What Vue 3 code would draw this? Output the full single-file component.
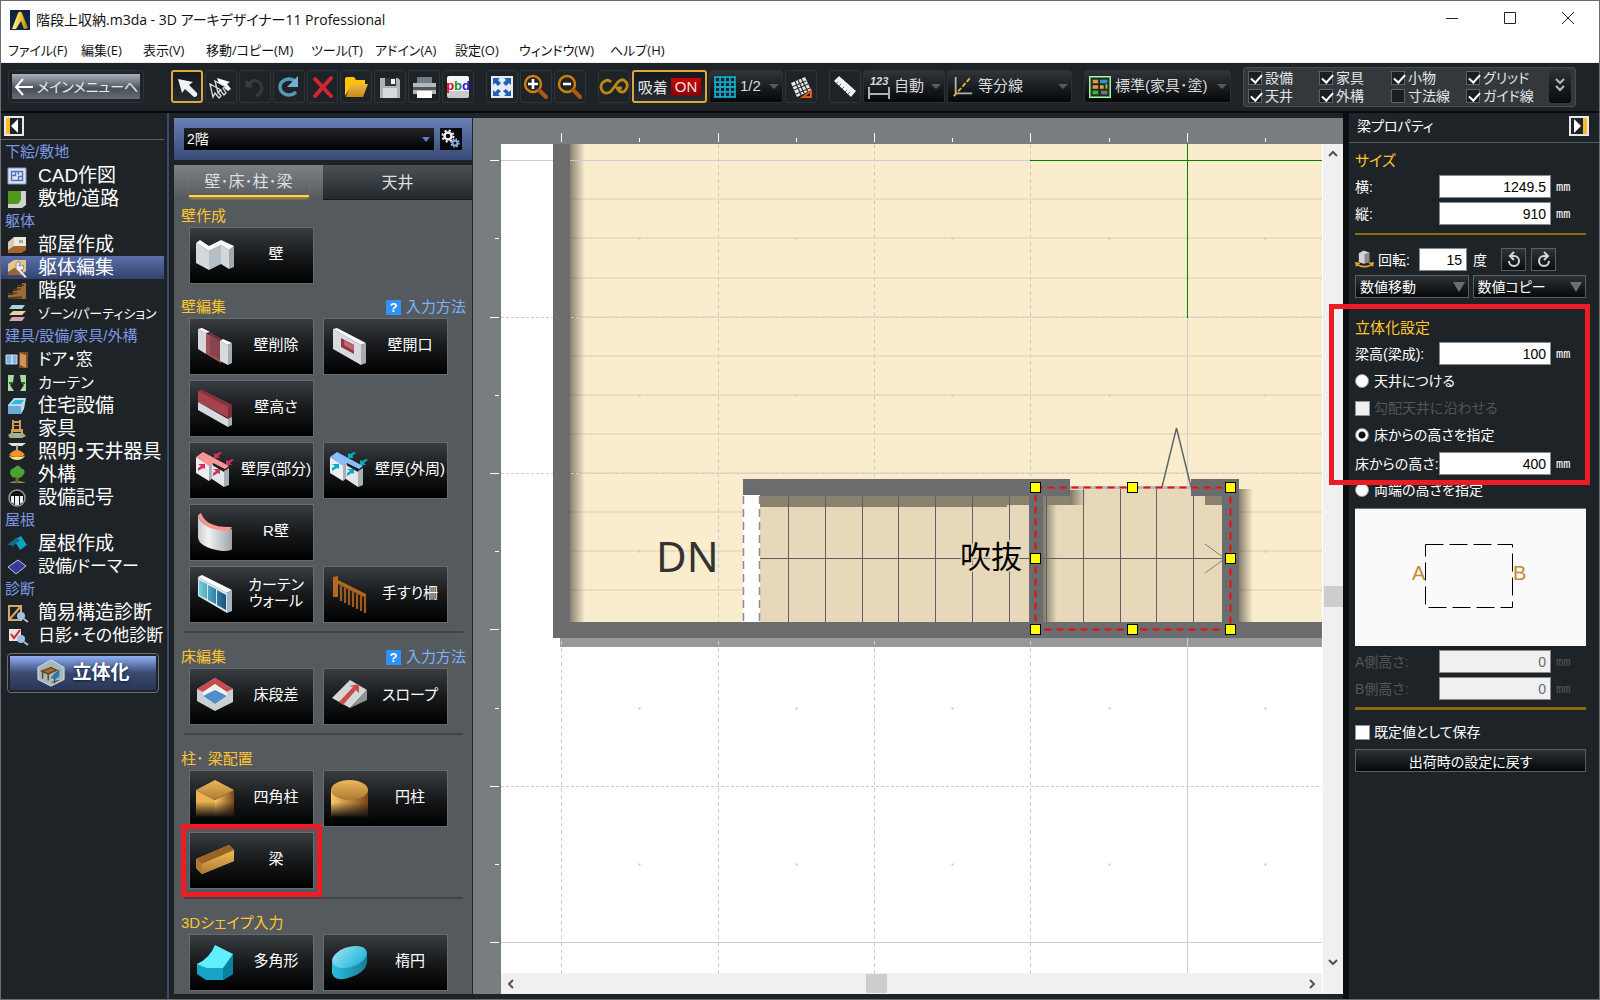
<template>
  <div class="window">
    <svg class="sprite" aria-hidden="true">
      <defs>
        <linearGradient id="g-wood" x1="0" x2="1"><stop offset="0" stop-color="#fdc868" /><stop offset="1" stop-color="#7a4717" /></linearGradient>
        <linearGradient id="g-wood-top" x1="0" y1="0" x2="0" y2="1"><stop offset="0" stop-color="#edb958" /><stop offset="1" stop-color="#ac7936" /></linearGradient>
        <linearGradient id="g-fade" x1="0" y1="0" x2="0" y2="1"><stop offset="0.4" stop-color="#111" stop-opacity="0" /><stop offset="1" stop-color="#111" /></linearGradient>
        <linearGradient id="g-curve" x1="0" x2="1"><stop offset="0" stop-color="#c9ccce" /><stop offset="0.3" stop-color="#f1f3f4" /><stop offset="1" stop-color="#9ea3a6" /></linearGradient>
        <linearGradient id="g-glass" x1="0" x2="1"><stop offset="0" stop-color="#6fd0d8" /><stop offset="1" stop-color="#174f85" /></linearGradient>
        <linearGradient id="g-cyan" x1="0" x2="1" y1="0" y2="1"><stop offset="0" stop-color="#9fe3f2" /><stop offset="1" stop-color="#12b2d8" /></linearGradient>
        <linearGradient id="g-cyan-side" x1="0" x2="1"><stop offset="0" stop-color="#2bbfe0" /><stop offset="1" stop-color="#1a7d94" /></linearGradient>
        <linearGradient id="g-folder" x1="0" y1="0" x2="0" y2="1"><stop offset="0" stop-color="#f3b93c" /><stop offset="1" stop-color="#c78a1c" /></linearGradient>
        <linearGradient id="g-gold" x1="0" x2="1"><stop offset="0" stop-color="#fff0a0" /><stop offset="0.5" stop-color="#f3cf3c" /><stop offset="1" stop-color="#a87c10" /></linearGradient>
      </defs>

      <!-- toolbar -->
      <symbol id="t-select" viewBox="0 0 30 30"><path d="M6 7l4 14 3-4 9 8q4 0 3-4l-8-8 4-3z" fill="#f2f2f2" /></symbol>
      <symbol id="t-multi" viewBox="0 0 30 30"><path d="M11 6l13 4-3 2 4 5-3 2-5-4-2 2z" fill="#fff" /><path d="M4 12l3 13 2-4 4 5 2-2-3-4 3-2zM9 9l3 12 2-3 4 5 2-2-3-5 3-1z" fill="#1b1f22" stroke="#ddd" stroke-width="1.3" /></symbol>
      <symbol id="t-undo" viewBox="0 0 30 30"><path d="M7 9v5h5M8 13q6-8 12-2 5 8-4 13" fill="none" stroke="#343a3e" stroke-width="3" /></symbol>
      <symbol id="t-redo" viewBox="0 0 30 30"><path d="M22 20a9 8 0 1 1-1-11" fill="none" stroke="#5799b4" stroke-width="3.4" /><path d="M24 4v11H13z" fill="#6fb2ca" /></symbol>
      <symbol id="t-delete" viewBox="0 0 30 30"><path d="M7 7l16 17M23 6L7 24" stroke="#d3252f" stroke-width="4" stroke-linecap="round" /></symbol>
      <symbol id="t-open" viewBox="0 0 30 30"><path d="M4 24V7q0-2 2-2h7l2 3h9v5H11z" fill="#ffc400" /><path d="M5 25l5-13h17l-5 13z" fill="url(#g-folder)" /></symbol>
      <symbol id="t-save" viewBox="0 0 30 30"><path d="M5 6h18l2 2v18H5z" fill="#aeb2b5" /><path d="M10 6h11v8H10z" fill="#33383b" /><path d="M16 7h4v5h-4z" fill="#f3f3f3" /><path d="M8 16h14v10H8z" fill="#d8dadb" /></symbol>
      <symbol id="t-print" viewBox="0 0 30 30"><path d="M8 5h15v8H8z" fill="#737b83" /><path d="M4 11h23v11H4z" fill="#b4b9bd" /><path d="M4 15h23v3H4z" fill="#4d565c" /><path d="M8 19h15v7H8z" fill="#fff" /></symbol>
      <symbol id="t-fit" viewBox="0 0 30 30"><path d="M4 4h22v22H4z" fill="#e7ebef" /><path d="M6 6h7l-2 2 3 3-3 3-3-3-2 2zM24 6h-7l2 2-3 3 3 3 3-3 2 2zM6 24h7l-2-2 3-3-3-2-3 3-2-2zM24 24h-7l2-2-3-3 3-2 3 3 2-2z" fill="#1d62b5" /></symbol>
      <symbol id="t-zoomin" viewBox="0 0 30 30"><circle cx="12" cy="12" r="8" fill="none" stroke="#d67d0c" stroke-width="2.4" /><path d="M12 7v10M7 12h10" stroke="#fff" stroke-width="2.6" /><path d="M18 18l7 7" stroke="#a75d0c" stroke-width="4" stroke-linecap="round" /></symbol>
      <symbol id="t-zoomout" viewBox="0 0 30 30"><circle cx="12" cy="12" r="8" fill="none" stroke="#d67d0c" stroke-width="2.4" /><path d="M8 12h8" stroke="#fff" stroke-width="2.6" /><path d="M18 18l7 7" stroke="#a75d0c" stroke-width="4" stroke-linecap="round" /></symbol>
      <symbol id="t-loop" viewBox="0 0 30 30"><path d="M12 10q-3-3-6-1-4 2-4 6t4 6q4 1 7-3l6-8q4-4 7-1 3 2 2 6t-4 5-6-4h5" fill="none" stroke="#b98a0e" stroke-width="2.800" /></symbol>
      <symbol id="t-grid" viewBox="0 0 20 20"><path d="M0 0h20v20H0z" fill="#04242c" /><path d="M1 0v20M5.500 0v20M10 0v20M14.500 0v20M19 0v20M0 1h20M0 5.500h20M0 10h20M0 14.500h20M0 19h20" stroke="#18a6c4" stroke-width="1.600" /></symbol>
      <symbol id="t-rotgrid" viewBox="0 0 30 30"><path d="M5 11l14-6 6 13-14 7z" fill="#e8e8e8" /><path d="M9 9l6 14M12 8l6 13M15 6l7 14M6 15l14-6M8 18l14-6M10 22l14-6" stroke="#2b3033" stroke-width="1.2" /><path d="M17 25h8v-6z" fill="#1b1f22" stroke="#dd5b16" stroke-width="2" /></symbol>
      <symbol id="t-ruler" viewBox="0 0 30 30"><path d="M4 9l5-5 17 15-5 6z" fill="#f1f1f1" /><path d="M6 12l2-2M9 14l2-2M12 17l2-2M15 20l2-2M18 22l2-2" stroke="#666" /></symbol>
      <symbol id="t-divide" viewBox="0 0 24 24"><path d="M4 1v18h18" fill="none" stroke="#aeb2b4" stroke-width="2" /><path d="M2 22L20 2" stroke="#e7b434" stroke-width="2" stroke-dasharray="5 2" /></symbol>
      <symbol id="t-plan" viewBox="0 0 24 24"><path d="M0 0h24v24H0z" fill="#eafbe8" /><path d="M1.500 1.500h21v21h-21z" fill="#193022" stroke="#47ae4c" stroke-width="1.500" /><path d="M4 4h6v4H4zM4 10h6v4H4z" fill="#f0904a" /><path d="M4 16h6v4H4z" fill="#42b03e" /><path d="M12 4h8v4h-8z" fill="#3f8bd6" /><path d="M12 10h4v4h-4zM18 9h2v5h-2z" fill="#e8a04a" /><path d="M13 16h7v4h-7z" fill="#777" /></symbol>

      <!-- category list -->
      <symbol id="s-cad" viewBox="0 0 24 20"><path d="M3 2h18v16H3z" fill="#dfe7f6" stroke="#8798bb" /><path d="M6.500 5.500h11v9h-11zM10.500 5.500v4h-4M13.500 14.500v-4h4M13.500 5.500v3" fill="none" stroke="#5574ba" stroke-width="1.500" /></symbol>
      <symbol id="s-site" viewBox="0 0 24 20"><path d="M3 2h18v14l-4 3H3z" fill="#cfd2d0" /><path d="M3 2h13v9l-3 4H3z" fill="#4f9a1e" /></symbol>
      <symbol id="s-room" viewBox="0 0 24 20"><path d="M3 7l6-5h12v12l-5 4H3z" fill="#d9cdb6" /><path d="M9 2h12v11H9z" fill="#efe9dc" /><path d="M3 15l6-4h12v4l-5 3H3z" fill="#a5672e" /><path d="M14 5h4v3h-4z" fill="#aaa" /></symbol>
      <symbol id="s-body" viewBox="0 0 24 20"><path d="M3 6l6-4h12v11l-5 4H3z" fill="#e3c78f" /><path d="M3 14l6-4 9 2-3 5H3z" fill="#9c6331" /><path d="M11 7q0-4 4-3l-1 4 4-1q2 5-2 5l6 7-2 1-7-7q-3-1-2-6z" fill="#eee" stroke="#555" stroke-width=".6" /></symbol>
      <symbol id="s-stairs" viewBox="0 0 24 20"><path d="M3 17v-3h5v-4h4V6h5V2h4v16z" fill="#9a6a3a" /><path d="M3 13l9-1M8 9l8-1M12 5l7-1M3 17l14-1" stroke="#5d3c1d" stroke-width="1.500" /></symbol>
      <symbol id="s-zone" viewBox="0 0 24 20"><path d="M7 1h13l-3 4H4z" fill="#a2d8dd" /><path d="M8 7h13l-4 4H4z" fill="#ecd398" /><path d="M7 13h13l-3 4H4z" fill="#d8a2b6" /></symbol>
      <symbol id="s-door" viewBox="0 0 24 20"><path d="M1 5h11v9H1z" fill="#7db1e7" stroke="#c6d7e6" /><path d="M7 5v9" stroke="#fff" /><path d="M14 2h9v16h-9z" fill="#7c4c27" /><path d="M15 3l6 2v13l-6-3z" fill="#cf945a" /></symbol>
      <symbol id="s-curtain" viewBox="0 0 24 20"><path d="M3 2h6l-1 7-3 3 4 6H3zM21 2h-6l1 7 3 3-4 6h6z" fill="#a9dc9c" /><path d="M4 10h3M17 10h3" stroke="#1d6b2c" stroke-width="2" /></symbol>
      <symbol id="s-equip" viewBox="0 0 24 20"><path d="M3 9l6-7h12l-2 11-3 5H3z" fill="#b9dcf2" /><path d="M6 8l4-4h9l-3 4z" fill="#32bbd0" /><path d="M3 10h13v8H3z" fill="#6ba9dc" /></symbol>
      <symbol id="s-chair" viewBox="0 0 24 20"><path d="M3 16l3-2h12l3 3-4 2H5z" fill="#98b898" /><path d="M7 11V1h2v10zM14 11V1h2v10zM8 2h7v2H8zM8 6h7v1H8zM6 10h12v3H6zM6 13h2v5H6zM16 13h2v5h-2z" fill="#d29b58" /></symbol>
      <symbol id="s-lamp" viewBox="0 0 24 20"><path d="M3 1h18l-4 3H7z" fill="#e4e1d8" /><path d="M12 3v6" stroke="#aaa" stroke-width="2" /><path d="M4 13q4-5 8-5t8 5q-8 4-16 0z" fill="#ef952a" /><path d="M4 14q8 2 16 0-3 4-8 4t-8-4z" fill="#ffdf8a" /></symbol>
      <symbol id="s-tree" viewBox="0 0 24 20"><path d="M4 18q8-4 17 0z" fill="#70a55c" /><path d="M12 8v10" stroke="#8c5a2a" stroke-width="3" /><path d="M5 8q0-4 4-5 4-5 7 0 5 2 3 6-4 6-8 3-4 2-6-4z" fill="#49a331" /></symbol>
      <symbol id="s-mark" viewBox="0 0 24 20"><circle cx="12" cy="10" r="8" fill="#111" stroke="#999" stroke-width="1.500" /><path d="M6 8h3v8l-3-2zM10 8h4v9h-4zM15 8h3v6l-3 2z" fill="#eee" /></symbol>
      <symbol id="s-roof" viewBox="0 0 24 20"><path d="M9 6l7-4 6 9-7 5z" fill="#12a0c0" /><path d="M2 11l9-7 4 2-8 7-1-2z" fill="#0f6f8b" /></symbol>
      <symbol id="s-solar" viewBox="0 0 24 20"><path d="M3 10l10-7 8 6-10 8z" fill="#333b9b" stroke="#bfc4ea" stroke-width="1" /></symbol>
      <symbol id="s-frame" viewBox="0 0 24 20"><path d="M4 3h12v14H4zM4 17L16 3" fill="none" stroke="#d7a86a" stroke-width="2" /><circle cx="16" cy="13" r="4" fill="#9dc2ea" /><path d="M19 16l4 3" stroke="#bbb" stroke-width="2" /></symbol>
      <symbol id="s-check" viewBox="0 0 24 20"><path d="M4 3h12v12H4z" fill="#ede4da" /><path d="M6 8l3 4 6-8" fill="none" stroke="#c9272d" stroke-width="2" /><circle cx="16" cy="13" r="4" fill="#9dc2ea" /><path d="M19 16l4 3" stroke="#bbb" stroke-width="2" /></symbol>

      <!-- part buttons -->
      <symbol id="p-wall" viewBox="0 0 40 40"><path d="M1 7l13 8v19L1 27zM26 9l8 5v19l-8-5z" fill="#d2d9de" /><path d="M14 15l12-6v19l-12 6z" fill="#b5bfc5" /><path d="M34 14l5-4v21l-5 2z" fill="#9ea9b0" /><path d="M1 7l4-3 9 6 12-6 13 6-5 4-8-5-12 6z" fill="#f5f8fa" /></symbol>
      <symbol id="p-cut" viewBox="0 0 40 40"><path d="M3 2l8 4v21l-8-5z" fill="#d4d7dc" /><path d="M3 2l4-1 8 4-4 1z" fill="#fff" /><path d="M11 6l15 8v22L11 27z" fill="#a2525a" /><path d="M15 5l12 7v23l-12-8z" fill="#7d3d46" opacity=".7" /><path d="M25 14l8 4v20l-8-4z" fill="#d7dade" /><path d="M25 14l3-2 9 4-4 2z" fill="#fff" /><path d="M33 18l4-2v20l-4 2z" fill="#a7abb0" /></symbol>
      <symbol id="p-hole" viewBox="0 0 40 40"><path d="M4 2l28 16v20L4 22z" fill="#d7dade" /><path d="M4 2l4-1 29 15-5 2z" fill="#f8f9fa" /><path d="M32 18l5-2v20l-5 2z" fill="#a7abb0" /><path d="M12 11l13 7v9l-13-7z" fill="#8f3944" /><path d="M15 13l10 6v5l-10-6z" fill="#c06670" /></symbol>
      <symbol id="p-height" viewBox="0 0 40 40"><path d="M3 2l4-1 30 15-4 2v11L3 13z" fill="#a5424c" /><path d="M3 2l4-1 30 15-4 2z" fill="#85333d" /><path d="M33 18l4-2v13l-4 2z" fill="#7d303a" /><path d="M3 13l30 17v8L3 21z" fill="#d7dade" /><path d="M33 30l4-2v8l-4 2z" fill="#aaaeb2" /></symbol>
      <symbol id="p-thick-part" viewBox="0 0 40 40"><path d="M1 6l13 8v16L1 22z" fill="#eceff1" /><path d="M14 14l4-2v15l-4 3zM29 20l5-3v17l-5 2z" fill="#a9afb3" /><path d="M17 14l12 7v15l-12-8z" fill="#e3e6e8" /><path d="M1 6l7-5 26 14-4 3-12-6-4 3z" fill="#fc9696" /><path d="M3 13h7v5l-2-1-5 3v-3l3-2zM18 18h7v5l-2-1-5 3v-3l3-2zM27 2l-4 3 2 2h-6V2l2 1 4-2zM39 9l-4 3 2 2h-6V9l2 1 4-2z" fill="#d0305f" /></symbol>
      <symbol id="p-thick-all" viewBox="0 0 40 40"><path d="M1 6l13 8v16L1 22z" fill="#eceff1" /><path d="M14 14l4-2v15l-4 3zM29 20l5-3v17l-5 2z" fill="#a9afb3" /><path d="M17 14l12 7v15l-12-8z" fill="#e3e6e8" /><path d="M1 6l7-5 26 14-4 3-12-6-4 3z" fill="#88bdfb" /><path d="M3 13h7v5l-2-1-5 3v-3l3-2zM18 18h7v5l-2-1-5 3v-3l3-2zM27 2l-4 3 2 2h-6V2l2 1 4-2zM39 9l-4 3 2 2h-6V9l2 1 4-2z" fill="#05adc2" /></symbol>
      <symbol id="p-round" viewBox="0 0 40 40"><path d="M3 2q4 15 30 15l4-1v20q-1 2-10 2Q3 34 3 24z" fill="url(#g-curve)" /><path d="M3 2l3-2q5 15 31 14l-3 4Q8 18 3 2z" fill="#fa9490" /></symbol>
      <symbol id="p-curtainwall" viewBox="0 0 40 40"><path d="M3 2l29 16v20L3 21z" fill="#d7e8f0" /><path d="M3 2l4-2 30 15-5 3z" fill="#fff" /><path d="M32 18l5-3v21l-5 2z" fill="#aab4bc" /><path d="M4 5l8 4v15l-8-4zM13 10l8 4v15l-8-4zM22 15l9 5v15l-9-5z" fill="url(#g-glass)" /></symbol>
      <symbol id="p-rail" viewBox="0 0 40 40"><path d="M4 2l5-1v21H4zM9 5l28 14v4L9 9z" fill="#b3691f" /><path d="M12 9v17M16 11v17M20 13v17M24 15v17M28 17v17M32 19v17M36 20v18" stroke="#9f5b1d" stroke-width="2.200" /></symbol>
      <symbol id="p-step" viewBox="0 0 40 40"><path d="M2 12l18-11 18 11v13L20 34 2 24z" fill="#ccd0d2" /><path d="M2 12l18-11 18 11-7 3-11-8-12 8z" fill="#c94b4f" /><path d="M8 15l12-8 12 8v5l-12 7-12-7z" fill="#eff0f0" /><path d="M8 19l12-6 12 6-12 8z" fill="#4f8dcb" /></symbol>
      <symbol id="p-slope" viewBox="0 0 40 40"><path d="M3 21L21 3l17 10-17 18z" fill="#d5d6d6" /><path d="M38 13v10L21 31z" fill="#8f9292" /><path d="M10 25l14-15-4-1 10-2v9l-3-3-13 15z" fill="#c94c50" /></symbol>
      <symbol id="p-square" viewBox="0 0 40 40"><path d="M1 11l19 10v16H1z" fill="#edb24f" /><path d="M20 21l19-10v26H20z" fill="url(#g-wood)" /><path d="M1 11L20 1l19 10-19 10z" fill="url(#g-wood-top)" /><path d="M0 12h40v26H0z" fill="url(#g-fade)" /></symbol>
      <symbol id="p-cylinder" viewBox="0 0 40 40"><path d="M2 10h37v27H2z" fill="url(#g-wood)" /><ellipse cx="20.500" cy="11" rx="18.500" ry="10" fill="url(#g-wood-top)" /><path d="M0 14h40v24H0z" fill="url(#g-fade)" /></symbol>
      <symbol id="p-beam" viewBox="0 0 40 40"><path d="M1 18L34 4l5 5v11L7 33l-6-6z" fill="#e5ac4c" /><path d="M1 18L34 4l5 5L7 23z" fill="#966526" /><path d="M1 18l6 5v10l-6-6z" fill="#b57a2f" /><path d="M7 23l32-13v10L7 33z" fill="url(#g-wood-top)" /></symbol>
      <symbol id="p-polygon" viewBox="0 0 40 40"><path d="M2 20l9 5h17l10-14v20l-10 6H11l-9-6z" fill="#18a5c5" /><path d="M28 24l10-14v21l-10 6z" fill="#0a81a0" /><path d="M2 21Q15 15 20 2l18 9-10 14H11z" fill="#5feffd" /></symbol>
      <symbol id="p-ellipse" viewBox="0 0 40 40"><path d="M3 19v11q3 10 19 4 15-5 16-15V9z" fill="url(#g-cyan-side)" /><ellipse cx="20.500" cy="14" rx="18" ry="10" transform="rotate(-18 20.500 14)" fill="url(#g-cyan)" /></symbol>
    </svg>

    <header class="titlebar">
      <svg class="app-icon" viewBox="0 0 20 20"><path d="M0 0h20v20H0z" fill="#102345" /><path d="M8 3q2-3 4 0l6 15-4 1-3-8-5 8H2z" fill="url(#g-gold)" /></svg>
      <h1>階段上収納.m3da - 3D アーキデザイナー11 Professional</h1>
      <div class="win-controls">
        <button type="button" aria-label="最小化"><svg viewBox="0 0 14 14"><path d="M1 7.500h12" /></svg></button>
        <button type="button" aria-label="最大化"><svg viewBox="0 0 14 14"><path d="M1.500 1.500h11v11h-11z" /></svg></button>
        <button type="button" aria-label="閉じる"><svg viewBox="0 0 14 14"><path d="M1 1l12 12M13 1L1 13" /></svg></button>
      </div>
    </header>

    <nav class="menubar">
      <a v-for="m in menus" :key="m" href="#">{{ m }}</a>
    </nav>

    <div class="toolbar">
      <button type="button" class="back"><span><svg viewBox="0 0 20 20"><path d="M19 10H2M9 2l-7 8 7 8" /></svg>メインメニューへ</span></button>
      <div class="tools">
        <button v-for="t in fileTools" :key="t.icon" type="button" class="tool" :class="{ on: t.icon === 'select' }" :aria-label="t.name">
          <span v-if="t.icon === 'text'" class="letters"><b>p</b><b>b</b><b>d</b></span>
          <svg v-else><use :href="'#t-' + t.icon" /></svg>
        </button>
      </div>
      <div class="tools view-tools">
        <button v-for="t in viewTools" :key="t.icon" type="button" class="tool" :aria-label="t.name"><svg><use :href="'#t-' + t.icon" /></svg></button>
      </div>
      <div class="group">
        <button type="button" class="tool" aria-label="連続"><svg><use href="#t-loop" /></svg></button>
        <button type="button" class="tool snap on">吸着<b>ON</b></button>
        <label class="drop w-grid"><svg><use href="#t-grid" /></svg><select aria-label="グリッド"><option>1/2</option></select></label>
        <button type="button" class="tool" aria-label="グリッド回転"><svg><use href="#t-rotgrid" /></svg></button>
      </div>
      <div class="group">
        <button type="button" class="tool" aria-label="計測"><svg><use href="#t-ruler" /></svg></button>
        <label class="drop w-dim"><span class="dim-icon">123</span><select aria-label="寸法"><option>自動</option></select></label>
        <label class="drop w-divide"><svg><use href="#t-divide" /></svg><select aria-label="補助線"><option>等分線</option></select></label>
      </div>
      <label class="drop w-plan"><svg><use href="#t-plan" /></svg><select aria-label="表示"><option>標準(家具･塗)</option></select></label>
      <div class="layers">
        <div class="layer-grid">
          <label v-for="l in layers" :key="l.name"><input v-model="l.on" type="checkbox">{{ l.name }}</label>
        </div>
        <button type="button" aria-label="展開"><svg viewBox="0 0 12 16"><path d="M2 2l4 4 4-4M2 9l4 4 4-4" /></svg></button>
      </div>
    </div>

    <main class="work">
      <aside class="side">
        <div class="side-head"><button type="button" class="fold" aria-label="たたむ"></button></div>
        <ul>
          <li v-for="c in categories" :key="c.name" :class="[c.size, { group: !c.icon, active: c.name === '躯体編集' }]">
            <template v-if="!c.icon">{{ c.name }}</template>
            <a v-else href="#"><svg><use :href="'#s-' + c.icon" /></svg>{{ c.name }}</a>
          </li>
        </ul>
        <button type="button" class="solid"><span>
          <svg viewBox="0 0 32 30"><path d="M16 1l14 8v13l-14 7-14-7V9z" fill="#a8b9bb" stroke="#dbe6ea" /><path d="M6 13l10-4 6 3-9 4zM7 14v7M13 16v7" fill="#a66a30" stroke="#65401c" stroke-width="1.500" /><path d="M19 16l6-5v8l-5 3-4-2z" fill="#2d78ad" /><path d="M20 21v5M17 25l7-2" stroke="#333" /></svg>立体化</span></button>
      </aside>

      <section class="parts">
        <div class="floor">
          <label class="floor-pick"><select aria-label="階"><option>2階</option></select></label>
          <button type="button" aria-label="階の設定"><svg viewBox="0 0 22 22"><circle cx="8" cy="8" r="3.500" fill="none" stroke="#eee" stroke-width="2.500" /><circle cx="8" cy="8" r="5.500" fill="none" stroke="#eee" stroke-width="2" stroke-dasharray="2.160 2.160" /><circle cx="15" cy="15" r="2.500" fill="none" stroke="#86b5e4" stroke-width="2" /><circle cx="15" cy="15" r="4" fill="none" stroke="#86b5e4" stroke-width="1.500" stroke-dasharray="1.570 1.570" /></svg></button>
        </div>
        <div class="tabs">
          <button type="button" class="current"><span>壁･床･柱･梁</span></button>
          <button type="button">天井</button>
        </div>
        <div class="sections">
          <section v-for="s in sections" :key="s.title" :class="{ ruled: s.ruled }">
            <h2>{{ s.title }}<a v-if="s.help" href="#"><i>?</i>入力方法</a></h2>
            <div class="part-grid">
              <button v-for="p in s.parts" :key="p.name" type="button" :class="{ first: p.first, marked: p.name === '梁' }">
                <svg><use :href="'#p-' + p.icon" /></svg><span>{{ p.name }}</span>
              </button>
            </div>
          </section>
        </div>
      </section>

      <section class="plan">
        <svg class="ruler-x"><g transform="translate(-473 -118)"><path v-for="x in majorX" :key="x" :d="`M${x} 133v9`" /><path v-for="x in minorX" :key="x" :d="`M${x} 138v4`" /></g></svg>
        <svg class="ruler-y"><g transform="translate(-473 -144)"><path v-for="y in majorY" :key="y" :d="`M490 ${y}h9`" /><path v-for="y in minorY" :key="y" :d="`M495 ${y}h4`" /></g></svg>
        <svg class="drawing">
          <defs>
            <linearGradient id="g-shade"><stop offset="0" stop-color="#3c382e" stop-opacity=".6" /><stop offset="1" stop-color="#3c382e" stop-opacity="0" /></linearGradient>
          </defs>
          <g transform="translate(-501 -144)">
            <path d="M570 144h900v478H570z" fill="#faedce" />
            <path v-for="y in planks" :key="y" :d="`M570 ${y}h900`" stroke="#e5d9b8" stroke-width="1.500" />
            <path d="M570 144h15v478h-15z" fill="url(#g-shade)" />
            <path d="M560 638h900v9H560z" fill="#999" />
            <g stroke="#cccdd0" fill="none">
              <path d="M501 160.500h530M501 942.500h900M1187.500 144v900" />
              <path v-for="x in majorX.slice(0, 4)" :key="x" :d="`M${x} 144v900`" stroke-dasharray="4 3" />
              <path d="M501 317.500h900M501 473.500h900M501 786.500h900" stroke-dasharray="3 2" />
            </g>
            <template v-for="y in minorY" :key="y">
              <path v-for="x in minorX" :key="x" :d="`M${x - 1} ${y}h2`" stroke="#c6c7ca" stroke-width="2" />
            </template>
            <path d="M1030 160.500h400M1187.500 144v174" stroke="#008000" />

            <path d="M760 496h310v-8h121v8h31v126H760z" fill="#e7d8ba" />
            <path d="M760 496h310v9h-63v2H760z" fill="#8b8170" />
            <path d="M1205 496h17v9h-17z" fill="#8b8170" />
            <path d="M1070 490h16v15h-16z" fill="url(#g-shade)" />
            <path d="M1043 505h14v117h-14z" fill="url(#g-shade)" />
            <path d="M1239 489h14v133h-14z" fill="url(#g-shade)" />
            <path v-for="x in stairs" :key="x" :d="`M${x} 496v126`" stroke="#5d6063" />
            <path d="M1083.500 488v8M1120.500 488v8M1156.500 488v8" stroke="#5d6063" />
            <path d="M760 558.500h462" stroke="#5d6063" />
            <path d="M1205 544l18 13M1205 573l18-13" stroke="#807c72" fill="none" />
            <path d="M1070 487.500h121" stroke="#b9bcc0" stroke-width="3" />
            <path d="M1162 487l14.500-59 14.500 59" stroke="#646668" stroke-width="1.500" fill="none" />

            <g fill="#6b6c6e">
              <path d="M553 144h17v478h900v16H553z" />
              <path d="M743 479h327v17h-27v126h-14V496H743z" />
              <path d="M1191 479h48v143h-17V496h-31z" />
            </g>
            <path d="M743 495h17v127h-17z" fill="#fff" />
            <path d="M743.500 496v126M759.500 496v126" stroke="#8a8c90" stroke-width="1.500" stroke-dasharray="8 5" />
            <text class="label-dn" x="656" y="572">DN</text>
            <text class="label-void" x="960" y="568">吹抜</text>
            <path d="M1035.500 487.500h195v142h-195z" fill="none" stroke="#f20a0e" stroke-width="2" stroke-dasharray="7 5" />
            <g fill="#ff0" stroke="#000">
              <rect v-for="h in handles" :key="h.join()" :x="h[0]" :y="h[1]" width="10" height="10" />
            </g>
          </g>
        </svg>
        <div class="vscroll"><svg viewBox="0 0 12 12"><path d="M2 8l4-4 4 4" /></svg><i></i><svg viewBox="0 0 12 12"><path d="M2 4l4 4 4-4" /></svg></div>
        <div class="hscroll"><svg viewBox="0 0 12 12"><path d="M8 2L4 6l4 4" /></svg><i></i><svg viewBox="0 0 12 12"><path d="M4 2l4 4-4 4" /></svg></div>
      </section>

      <aside class="props">
        <header><span>梁プロパティ</span><button type="button" class="fold right" aria-label="たたむ"></button></header>
        <form @submit.prevent>
          <h2>サイズ</h2>
          <div class="field"><label for="w">横:</label><input id="w" value="1249.5"><em>mm</em></div>
          <div class="field"><label for="d">縦:</label><input id="d" value="910"><em>mm</em></div>
          <hr>
          <div class="rotate">
            <svg viewBox="0 0 20 20"><path d="M4 3l5-3 6 2v10l-6 2-5-2z" fill="#d4d4d4" /><path d="M10 4l5-2v10l-5 2z" fill="#8b8b8b" /><path d="M0 12l6 1-2 2q6 2 12 0l-2-2 6-1-1 5-2-1q-7 4-14 0l-2 1z" fill="#e0a428" /></svg>
            <label for="r">回転:</label><input id="r" value="15"><span>度</span>
            <button type="button" aria-label="左回転"><svg viewBox="0 0 20 20"><path d="M7 6h3a5 5 0 1 1-5 5M10 2L6 6l4 4" /></svg></button>
            <button type="button" aria-label="右回転"><svg viewBox="0 0 20 20"><path d="M13 6h-3a5 5 0 1 0 5 5M10 2l4 4-4 4" /></svg></button>
          </div>
          <div class="pair">
            <label class="pick"><select aria-label="数値移動"><option>数値移動</option></select></label>
            <label class="pick"><select aria-label="数値コピー"><option>数値コピー</option></select></label>
          </div>
          <div class="solid-set">
            <h2>立体化設定</h2>
            <div class="field"><label for="h">梁高(梁成):</label><input id="h" value="100"><em>mm</em></div>
            <label class="choice"><input v-model="base" type="radio" value="ceiling"><span>天井につける</span></label>
            <label class="choice off"><input type="checkbox" disabled><span>勾配天井に沿わせる</span></label>
            <label class="choice"><input v-model="base" type="radio" value="floor"><span>床からの高さを指定</span></label>
            <div class="field"><label for="fh">床からの高さ:</label><input id="fh" value="400"><em>mm</em></div>
          </div>
          <label class="choice ends"><input v-model="base" type="radio" value="ends"><span>両端の高さを指定</span></label>
          <div class="preview">
            <span>A</span><svg viewBox="0 0 88 64"><path d="M.5.5h87v63H.5z" /></svg><span>B</span>
          </div>
          <div class="field off"><label for="ha">A側高さ:</label><input id="ha" value="0" disabled><em>mm</em></div>
          <div class="field off"><label for="hb">B側高さ:</label><input id="hb" value="0" disabled><em>mm</em></div>
          <hr class="thick">
          <label class="choice save"><input type="checkbox"><span>既定値として保存</span></label>
          <button type="button" class="reset">出荷時の設定に戻す</button>
        </form>
      </aside>
    </main>
  </div>
</template>

<script setup>
import { reactive, ref } from 'vue';

const menus = ['ファイル(F)', '編集(E)', '表示(V)', '移動/コピー(M)', 'ツール(T)', 'アドイン(A)', '設定(O)', 'ウィンドウ(W)', 'ヘルプ(H)'];

const fileTools = [
  { icon: 'select', name: '選択' },
  { icon: 'multi', name: '複数選択' },
  { icon: 'undo', name: '元に戻す' },
  { icon: 'redo', name: 'やり直し' },
  { icon: 'delete', name: '削除' },
  { icon: 'open', name: '開く' },
  { icon: 'save', name: '保存' },
  { icon: 'print', name: '印刷' },
  { icon: 'text', name: '文字' }
];
const viewTools = [
  { icon: 'fit', name: '全体表示' },
  { icon: 'zoomin', name: '拡大' },
  { icon: 'zoomout', name: '縮小' }
];

const layers = reactive([
  { name: '設備', on: true },
  { name: '家具', on: true },
  { name: '小物', on: true },
  { name: 'グリッド', on: true },
  { name: '天井', on: true },
  { name: '外構', on: true },
  { name: '寸法線', on: false },
  { name: 'ガイド線', on: true }
]);

// entries without an icon are group headings
const categories = [
  { name: '下絵/敷地' },
  { name: 'CAD作図', icon: 'cad' },
  { name: '敷地/道路', icon: 'site' },
  { name: '躯体' },
  { name: '部屋作成', icon: 'room' },
  { name: '躯体編集', icon: 'body' },
  { name: '階段', icon: 'stairs' },
  { name: 'ゾーン/パーティション', icon: 'zone', size: 'tiny' },
  { name: '建具/設備/家具/外構' },
  { name: 'ドア・窓', icon: 'door', size: 'medium' },
  { name: 'カーテン', icon: 'curtain', size: 'small' },
  { name: '住宅設備', icon: 'equip' },
  { name: '家具', icon: 'chair' },
  { name: '照明・天井器具', icon: 'lamp' },
  { name: '外構', icon: 'tree' },
  { name: '設備記号', icon: 'mark' },
  { name: '屋根' },
  { name: '屋根作成', icon: 'roof' },
  { name: '設備/ドーマー', icon: 'solar', size: 'medium' },
  { name: '診断' },
  { name: '簡易構造診断', icon: 'frame' },
  { name: '日影・その他診断', icon: 'check', size: 'medium' }
];

// first: always starts a new row
const sections = [
  { title: '壁作成', parts: [{ name: '壁', icon: 'wall' }] },
  {
    title: '壁編集',
    help: true,
    parts: [
      { name: '壁削除', icon: 'cut' },
      { name: '壁開口', icon: 'hole' },
      { name: '壁高さ', icon: 'height', first: true },
      { name: '壁厚(部分)', icon: 'thick-part', first: true },
      { name: '壁厚(外周)', icon: 'thick-all' },
      { name: 'R壁', icon: 'round', first: true },
      { name: 'カーテン\nウォール', icon: 'curtainwall', first: true },
      { name: '手すり柵', icon: 'rail' }
    ]
  },
  {
    title: '床編集',
    help: true,
    ruled: true,
    parts: [{ name: '床段差', icon: 'step' }, { name: 'スロープ', icon: 'slope' }]
  },
  {
    title: '柱･ 梁配置',
    ruled: true,
    parts: [
      { name: '四角柱', icon: 'square' },
      { name: '円柱', icon: 'cylinder' },
      { name: '梁', icon: 'beam', first: true }
    ]
  },
  {
    title: '3Dシェイプ入力',
    ruled: true,
    parts: [{ name: '多角形', icon: 'polygon' }, { name: '楕円', icon: 'ellipse' }]
  }
];

const base = ref('floor');

// plan coordinates
const majorX = [561.5, 718.5, 874.5, 1030.5, 1187.5];
const minorX = [639.5, 796.5, 952.5, 1109.5, 1265.5];
const majorY = [160.5, 317.5, 473.5, 629.5, 786.5, 942.5];
const minorY = [238.5, 395.5, 551.5, 708.5, 864.5];
const planks = [199, 238, 278, 317, 356, 395, 434, 473, 512, 551, 590];
const stairs = [788.5, 825.5, 862.5, 898.5, 935.5, 972.5, 1009.5, 1046.5, 1083.5, 1120.5, 1156.5, 1193.5];
const handles = [
  [1030.5, 482.5], [1127.5, 482.5], [1225.5, 482.5],
  [1030.5, 553.5], [1225.5, 553.5],
  [1030.5, 624.5], [1127.5, 624.5], [1225.5, 624.5]
];
</script>

<style>
body { background: #1e2226; }
</style>

<style scoped>
.window {
  display: flex;
  flex-direction: column;
  height: 100vh;
  min-height: 600px;
  border: 1px solid #6c6c6e;
  background: #1e2327;
  color: #fff;
  font-family: "Liberation Sans", "Noto Sans CJK JP", sans-serif;
  font-size: 15px;
  font-weight: 400;
  font-feature-settings: "palt";
  overflow: hidden;
}
.window, .window * { box-sizing: border-box; }
button, select, input { font: inherit; font-feature-settings: inherit; color: inherit; margin: 0; }
button { padding: 0; border: 0; background: none; }
a { color: inherit; text-decoration: none; }
h1, h2, ul { margin: 0; padding: 0; font-weight: inherit; font-size: inherit; list-style: none; }
.sprite { position: absolute; width: 0; height: 0; }

/* title and menu */
.titlebar {
  display: flex;
  align-items: center;
  flex: none;
  height: 37px;
  padding-left: 9px;
  gap: 6px;
  background: #fff;
  color: #111;
}
.app-icon { width: 20px; height: 20px; }
.titlebar h1 { flex: 1; padding-bottom: 2px; font-family: "Open Sans", "Noto Sans CJK JP", sans-serif; font-size: 14px; }
.win-controls { display: flex; margin-right: 2px; }
.win-controls button { width: 58px; height: 36px; }
.win-controls svg { width: 14px; height: 14px; fill: none; stroke: #222; }
.menubar {
  display: grid;
  grid-template-columns: 73px 62px 63px 105px 64px 80px 64px 91px auto;
  justify-content: start;
  flex: none;
  height: 25px;
  padding-left: 7px;
  background: #fff;
  border-bottom: 1px solid #eeeef2;
  color: #111;
  font-family: "Open Sans", "Noto Sans CJK JP", sans-serif;
  font-size: 13px;
  line-height: 24px;
  white-space: nowrap;
}

/* toolbar */
.toolbar {
  display: flex;
  align-items: center;
  flex: none;
  height: 50px;
  padding: 0 0 1px 7px;
  gap: 12px;
  border-bottom: 2px solid #08090a;
  white-space: nowrap;
}
.back {
  width: 136px;
  height: 33px;
  margin-right: 15px;
  padding: 3px;
  border: 1px solid #2e3438;
  border-radius: 4px;
}
.back span {
  display: flex;
  align-items: center;
  justify-content: center;
  height: 100%;
  gap: 3px;
  background: linear-gradient(#a9b0bc, #4a5058 60%, #666d76);
  font-size: 14px;
  line-height: 24px;
  color: #e8eaec;
}
.back svg { width: 20px; height: 20px; fill: none; stroke: #fff; stroke-width: 2; }
.tools { display: grid; grid-template-columns: repeat(9, minmax(0, 1fr)); gap: 2px; width: 303px; }
.view-tools { grid-template-columns: repeat(3, minmax(0, 1fr)); width: 100px; }
.group { display: flex; gap: 2px; }
.tool {
  display: flex;
  align-items: center;
  justify-content: center;
  height: 33px;
  border: 1px solid #2e3438;
  border-radius: 3px;
}
.group .tool { min-width: 32px; }
.tool svg { flex: none; width: 30px; height: 30px; }
.tool.on { border: 2px solid #dba83a; background: linear-gradient(#15181c, #262c34); }
.letters {
  display: flex;
  justify-content: center;
  flex: none;
  width: 22px;
  height: 22px;
  border-radius: 2px;
  background: linear-gradient(#f5f5f5 70%, #c9cccf 70%);
  font-size: 13px;
  line-height: 19px;
}
.letters b { color: #e40012; }
.letters b:nth-child(2) { color: #11943c; }
.letters b:nth-child(3) { color: #2a18e0; }
.snap { width: 75px; gap: 3px; color: #e4e6e8; }
.snap b { padding: 0 4px; background: linear-gradient(#d00000, #850000); font-weight: 400; line-height: 18px; }
.drop {
  position: relative;
  display: flex;
  align-items: center;
  height: 33px;
  padding-left: 4px;
  gap: 4px;
  border: 1px solid #2b3034;
  border-radius: 3px;
  background: linear-gradient(#30353a, #060708);
  color: #d7dadc;
}
.drop svg { flex: none; width: 22px; height: 22px; }
.drop select { width: 100%; padding: 0 0 2px; border: 0; background: none; appearance: none; }
.drop::after {
  content: "";
  position: absolute;
  right: 3px;
  top: 13px;
  border: 5px solid transparent;
  border-top-color: #565c61;
}
.dim-icon {
  flex: none;
  width: 22px;
  height: 24px;
  border: solid #aab0b8;
  border-width: 0 2px;
  border-image: linear-gradient(transparent 50%, #aab0b8 50%) 1;
  background: linear-gradient(#aab0b8, #aab0b8) 0 18px / 100% 2px no-repeat;
  font-size: 11px;
  font-style: italic;
  font-weight: 700;
  line-height: 12px;
  text-align: center;
}
.w-grid { width: 74px; }
.w-dim { width: 82px; }
.w-divide { width: 125px; }
.w-plan { width: 147px; }
.layers {
  display: flex;
  align-items: center;
  height: 40px;
  width: 333px;
  padding: 2px 4px;
  border: 1px solid #464c50;
  border-radius: 3px;
  background: #33383c;
}
.layer-grid { display: grid; grid-template-columns: 71px 72px 75px auto; flex: 1; }
.layer-grid label { display: flex; align-items: center; gap: 3px; height: 18px; font-size: 14px; line-height: 18px; color: #e4e6e8; }
.layer-grid input {
  position: relative;
  appearance: none;
  width: 14px;
  height: 14px;
  border: 1px solid #5b6166;
  background: #1a1e21;
}
.layer-grid input:checked::after {
  content: "";
  position: absolute;
  left: 4px;
  top: 0;
  width: 5px;
  height: 9px;
  border: solid #fff;
  border-width: 0 2px 2px 0;
  transform: rotate(42deg);
}
.layers button { width: 22px; height: 33px; border-radius: 3px; background: linear-gradient(#2c3135, #08090a); }
.layers button svg { width: 12px; height: 16px; fill: none; stroke: #b4b8bb; stroke-width: 2; }

.work { display: flex; flex: 1; min-height: 0; }

/* category list */
.side { flex: none; width: 166px; padding-right: 3px; }
.side-head { height: 27px; padding: 3px; border-bottom: 1px solid #5b5f63; }
.fold {
  position: relative;
  display: block;
  width: 20px;
  height: 20px;
  border: 2px solid #e8e8ec;
  background: linear-gradient(90deg, #f7be28 4px, #1e2327 4px);
}
.fold::after {
  content: "";
  position: absolute;
  left: 5px;
  top: 1px;
  border: solid transparent;
  border-width: 7px 7px 7px 0;
  border-right-color: #fff;
}
.fold.right { background: linear-gradient(270deg, #f7be28 4px, #1e2327 4px); }
.fold.right::after { left: 3px; border-width: 7px 0 7px 7px; border-left-color: #fff; }
.side ul { margin-top: 1px; }
.side li { height: 23px; padding-left: 4px; line-height: 23px; font-size: 19px; white-space: nowrap; }
.side li.medium { font-size: 17px; }
.side li.small { font-size: 15px; }
.side li.tiny { font-size: 13px; }
.side li.group { font-size: 15px; line-height: 21px; color: #7c98e2; }
.side li.active { background: linear-gradient(#5b70ab, #33436e); }
.side li a { display: flex; align-items: center; gap: 9px; }
.side li svg { flex: none; width: 24px; height: 20px; }
.solid {
  width: 152px;
  height: 40px;
  margin: 6px 0 0 6px;
  padding: 2px;
  border: 1px solid #6b6e72;
  border-radius: 4px;
}
.solid span {
  display: flex;
  align-items: center;
  justify-content: center;
  height: 100%;
  gap: 6px;
  background: linear-gradient(#8fb0f5, #3b4970 50%, #2a3658);
  font-size: 19px;
  font-weight: 700;
  line-height: 32px;
  text-shadow: 0 1px 3px #0a1a40;
}
.solid svg { width: 30px; height: 28px; }

/* parts palette */
.parts {
  display: flex;
  flex-direction: column;
  flex: none;
  width: 306px;
  padding: 5px 1px 5px 5px;
  border-left: 2px solid #3a486b;
}
.floor {
  display: flex;
  gap: 6px;
  flex: none;
  height: 42px;
  padding: 10px;
  background: linear-gradient(#6a80b3, #384a78);
}
.floor-pick { position: relative; flex: none; width: 250px; }
.floor-pick select { width: 100%; height: 22px; padding: 0 3px; border: 0; background: linear-gradient(#22252a, #000); appearance: none; line-height: 20px; font-size: 14px; }
.floor-pick::after {
  content: "";
  position: absolute;
  right: 4px;
  top: 9px;
  border: solid transparent;
  border-width: 5px 4px 0;
  border-top-color: #5b82c8;
}
.floor button { width: 22px; height: 22px; background: #08090b; }
.floor button svg { display: block; width: 22px; height: 22px; }
.tabs { display: flex; flex: none; height: 40px; padding-top: 5px; color: #dcdfe1; font-size: 16px; }
.tabs button { flex: 1; padding-bottom: 2px; background: linear-gradient(#4b5155, #23282b); border-bottom: 1px solid #14181a; }
.tabs .current { padding: 0; background: linear-gradient(#7c8184, #54595d); border: 0; }
.tabs .current span { display: inline-block; width: 120px; line-height: 26px; border-bottom: 2px solid #ffd34f; box-shadow: 0 3px 3px -1px #b98a2a; }
.sections { flex: 1; min-height: 0; padding: 6px 0 0 15px; background: #555a5e; overflow: hidden; }
.sections section + section { margin-top: 13px; }
.sections section.ruled { margin-top: 8px; }
.ruled::before {
  content: "";
  display: block;
  width: 279px;
  height: 2px;
  margin: 0 0 14px -5px;
  background: #3f4447;
}
.sections h2 {
  display: flex;
  align-items: center;
  justify-content: space-between;
  width: 279px;
  height: 21px;
  margin-left: -8px;
  padding-bottom: 1px;
  color: #ffc530;
  line-height: 18px;
}
.sections h2 a { display: flex; align-items: center; gap: 5px; margin-right: -6px; color: #7ab2fb; }
.sections h2 i { width: 15px; background: #2f92f9; color: #fff; font-style: normal; font-weight: 700; font-size: 13px; line-height: 15px; text-align: center; }
.part-grid { display: grid; grid-template-columns: 125px 125px; gap: 5px 9px; }
.part-grid button {
  position: relative;
  display: flex;
  align-items: center;
  height: 57px;
  padding-left: 5px;
  border: 1px solid #666b70;
  background: linear-gradient(#393d41, #17191b 50%, #000);
}
.part-grid button.first { grid-column: 1; }
.part-grid svg { flex: none; width: 40px; height: 40px; }
.part-grid span { flex: 1; padding: 0 0 3px 4px; line-height: 16px; white-space: pre; text-align: center; }
.marked::after { content: ""; position: absolute; inset: -9px; border: 5px solid #ec1c24; z-index: 1; }

/* plan */
.plan {
  display: grid;
  grid-template: 26px 1fr 21px / 28px 1fr 21px;
  flex: 1;
  min-width: 0;
  margin: 5px 0;
  background: #787d80;
}
.plan svg { display: block; }
.ruler-x { grid-area: 1 / 1 / 2 / 4; width: 100%; height: 26px; stroke: #fff; }
.ruler-y { grid-area: 2 / 1 / 4 / 2; width: 28px; height: 100%; stroke: #fff; }
.drawing { grid-area: 2 / 2; width: 100%; height: 100%; min-height: 0; background: #fff; }
.label-dn { font-family: "Noto Sans", sans-serif; font-size: 42px; fill: #333; }
.label-void { font-family: "Noto Sans CJK JP", sans-serif; font-size: 31px; fill: #000; stroke: #e7d8ba; stroke-width: 3px; paint-order: stroke; }
.vscroll, .hscroll { display: grid; place-items: center; background: #f0f0f0; }
.vscroll { grid-area: 2 / 3 / 4 / 4; grid-template-rows: 12px 11fr 21px 9fr 12px; padding: 4px 0 26px; border-left: 1px solid #fff; }
.hscroll { grid-area: 3 / 2; grid-template-columns: 12px 5fr 21px 6fr 12px; padding: 0 4px; }
.vscroll svg, .hscroll svg { width: 12px; height: 12px; fill: none; stroke: #505254; stroke-width: 2; }
.vscroll i { grid-row: 3; width: 19px; height: 21px; background: #cdcdcd; }
.vscroll svg:last-child { grid-row: 5; }
.hscroll > * { grid-row: 1; }
.hscroll i { grid-column: 3; width: 21px; height: 19px; background: #cdcdcd; }
.hscroll svg:last-child { grid-column: 5; }

/* properties */
.props { flex: none; width: 256px; border-left: 6px solid #0b0e10; font-size: 14px; }
.props header {
  display: flex;
  justify-content: space-between;
  height: 30px;
  padding: 3px 10px 0 8px;
  border-bottom: 1px solid #53585c;
  line-height: 20px;
}
.props form { padding: 8px 13px 0 6px; }
.props h2 { color: #ffc530; font-size: 15px; line-height: 20px; }
.field { display: flex; align-items: center; height: 23px; margin: 4px 0; white-space: nowrap; }
.field label { width: 84px; padding-bottom: 2px; }
.field input, .rotate input {
  width: 112px;
  height: 23px;
  padding: 0 4px;
  border: 1px solid #85898c;
  background: #fff;
  color: #000;
  text-align: right;
}
.field em { margin: 2px 0 0 5px; font: 12px "Liberation Mono", monospace; }
.field.off, .choice.off { color: #50565a; }
.field.off input { background: #f0f0f0; color: #6b6b6b; }
hr { height: 2px; margin: 8px 0 13px; border: 0; background: #8d6a07; }
hr.thick { height: 3px; margin: 7px 0 12px; }
.rotate { display: flex; align-items: center; height: 23px; white-space: nowrap; }
.rotate > svg { width: 19px; height: 20px; margin-right: 4px; }
.rotate label { width: 41px; padding-bottom: 2px; }
.rotate input { width: 48px; }
.rotate span { width: 34px; padding: 0 0 2px 6px; }
.rotate button { width: 25px; height: 23px; margin-right: 5px; border: 1px solid #5a5f63; background: linear-gradient(#2f3438, #0b0c0d); }
.rotate button svg { display: block; width: 20px; height: 20px; margin: auto; fill: none; stroke: #d5d8d9; stroke-width: 2; }
.pair { display: grid; grid-template-columns: 1fr 1fr; gap: 4px; margin-top: 4px; }
.pick { position: relative; }
.pick select { display: block; width: 100%; height: 23px; padding: 0 4px; border: 1px solid #5a5f63; background: linear-gradient(#2d3236, #060708); appearance: none; border-radius: 0; }
.pick::after {
  content: "";
  position: absolute;
  right: 4px;
  top: 7px;
  border: solid transparent;
  border-width: 10px 6px 0;
  border-top-color: #6a6f73;
}
.solid-set { position: relative; margin-top: 20px; }
.solid-set::after { content: ""; position: absolute; inset: -14px -4px -10px -26px; border: 5px solid #ec1c24; z-index: 2; pointer-events: none; }
.choice { display: flex; align-items: center; height: 21px; margin: 6px 0; gap: 5px; white-space: nowrap; }
.choice span { padding-bottom: 3px; }
.choice input { appearance: none; width: 14px; height: 14px; margin-bottom: 1px; border: 1px solid #909396; background: #fff; }
.choice input[type="checkbox"] { width: 15px; height: 15px; margin-right: -1px; }
.choice input:disabled { background: #f0f0f0; }
.choice input[type="radio"] { border-radius: 50%; }
.choice input[type="radio"]:checked { background: radial-gradient(#111 3px, #fff 4px); }
.choice.save input:checked { background: #7ab2fb; }
.choice.ends { height: 19px; margin-bottom: 8px; }
.preview {
  display: flex;
  align-items: center;
  justify-content: center;
  height: 138px;
  margin: 0 0 4px;
  padding: 0 3px 4px 0;
  background: #fafafa;
  border-top: 1px solid #6c7074;
  color: #c08c30;
  font-size: 20px;
}
.preview svg { width: 88px; height: 64px; fill: none; stroke: #000; stroke-width: 1; stroke-dasharray: 18 6; }
.preview span { width: 13px; margin-bottom: 4px; }
.reset { width: 100%; height: 23px; border: 1px solid #5a5f63; background: linear-gradient(#2d3236, #060708); }
</style>
